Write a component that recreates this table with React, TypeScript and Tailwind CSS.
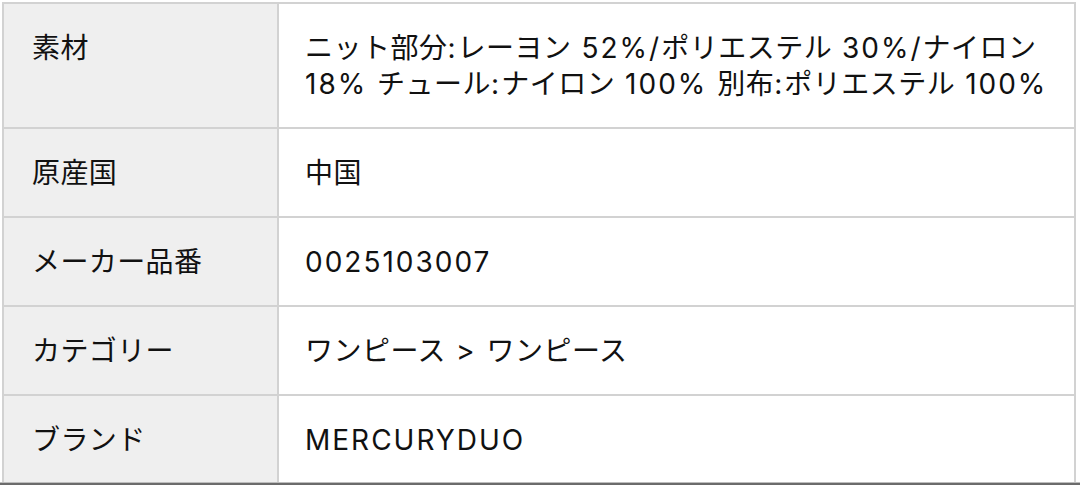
import React from "react";

function Spaced({ text }: { text: string }) {
  const parts = text.match(/[\x00-\x7F]+|[^\x00-\x7F]+/g) || [];
  return (
    <>
      {parts.map((p, i) =>
        /^[\x00-\x7F]+$/.test(p) ? (
          <span key={i} className="tracking-[2px]">
            {p}
          </span>
        ) : (
          <span key={i} className="tracking-[0.5px]">
            {p}
          </span>
        )
      )}
    </>
  );
}

const rows: { label: string; lines: string[] }[] = [
  {
    label: "素材",
    lines: [
      "ニット部分:レーヨン 52%/ポリエステル 30%/ナイロン",
      "18% チュール:ナイロン 100% 別布:ポリエステル 100%",
    ],
  },
  { label: "原産国", lines: ["中国"] },
  { label: "メーカー品番", lines: ["0025103007"] },
  { label: "カテゴリー", lines: ["ワンピース > ワンピース"] },
  { label: "ブランド", lines: ["MERCURYDUO"] },
];

export default function App() {
  return (
    <div
      className="h-[485px] w-[1080px] bg-white flex flex-col overflow-hidden text-[#111111]"
      style={{ fontFamily: '"Inter", "Noto Sans CJK JP", sans-serif' }}
    >
      <div className="flex-1 min-h-0 overflow-hidden pt-[2px] pl-[2px]">
        <div className="w-[1074px] border-x-2 border-t-2 border-[#d2d2d2]">
          {rows.map((r, i) => (
            <div
              key={i}
              className={`flex ${i > 0 ? "border-t-2 border-[#d2d2d2]" : ""}`}
            >
              <div className="w-[275px] shrink-0 bg-[#efefef] border-r-2 border-[#d2d2d2] pl-[28px] pr-4 py-[25.5px] text-[28px] leading-[36px] tracking-[0.4px]">
                {r.label}
              </div>
              <div className="flex-1 bg-white pl-[26px] pr-4 py-[25.5px] text-[28px] leading-[36px] whitespace-nowrap">
                {r.lines.map((l, j) => (
                  <div key={j}>
                    <Spaced text={l} />
                  </div>
                ))}
              </div>
            </div>
          ))}
        </div>
      </div>
      <div className="h-[1px] bg-[#bdbdbd] shrink-0" />
      <div className="h-[2px] bg-[#6b6b6b] shrink-0" />
    </div>
  );
}
